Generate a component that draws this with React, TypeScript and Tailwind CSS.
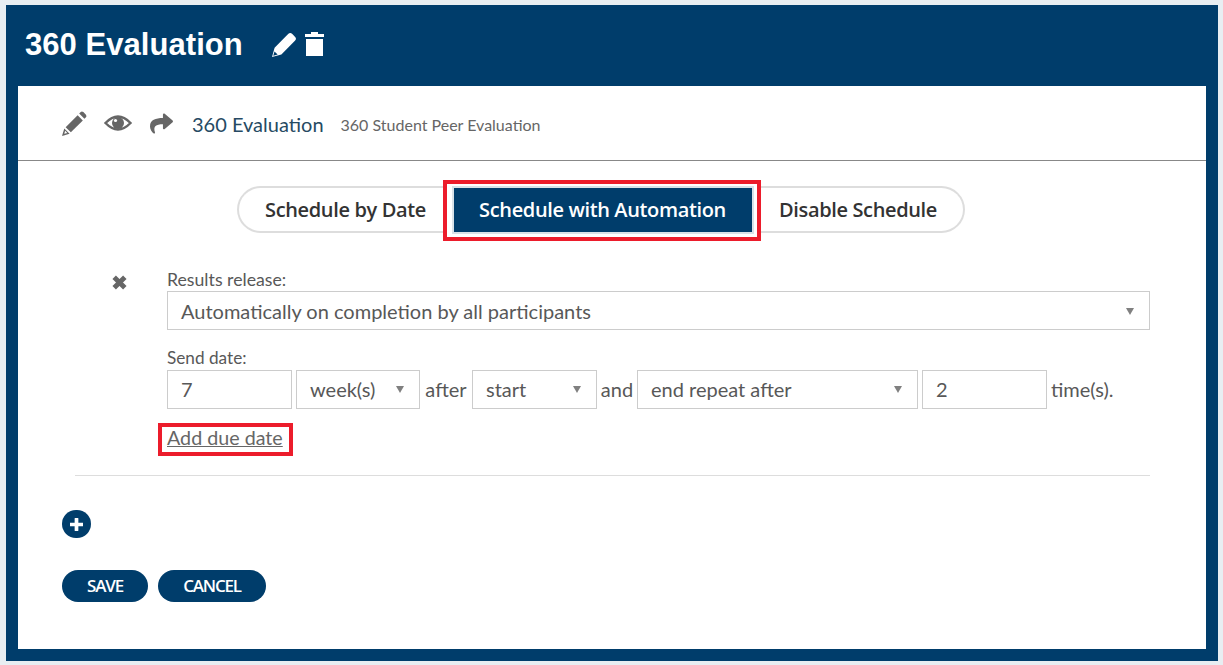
import React from 'react';
import { FaShare } from 'react-icons/fa';

const Caret = () => (
    <svg width="8" height="8" viewBox="0 0 8 8" className="shrink-0">
        <path d="M0 1h8L4 8z" fill="#808080" />
    </svg>
);

const SolidPencil = () => (
    <svg width="25" height="25" viewBox="0 0 24 24" className="ml-[29px]">
        <path d="M0 24 2.5 15 15.5 2Q17.5 0 19.5 2L22 4.5Q24 6.5 22 8.5L9 21.5Z" fill="#ffffff" />
        <path d="M1.2 22.8 2.4 18.6 5.4 21.6Z" fill="#003d6b" />
    </svg>
);

const Trash = () => (
    <svg width="21" height="24" viewBox="0 0 21 24" className="ml-[7px]">
        <path d="M7 0h7v2h6v3H1V2h6z" fill="#ffffff" />
        <path d="M2 7h17v17H2z" fill="#ffffff" />
    </svg>
);

const EditPencil = () => (
    <svg width="25" height="25" viewBox="0 0 24 24" fill="#666666">
        <path d="M3.5 15.5 15 4 20 9 8.5 20.5Z" />
        <path d="M16.5 2.5 18 1Q19 0 20.5 1L23 3.5Q24 5 23 6L21.5 7.5Z" />
        <path fillRule="evenodd" d="M0 24 2.2 16.7 7.3 21.8ZM2.2 21.8 5 21 3 19Z" />
    </svg>
);

const Eye = () => (
    <svg width="28" height="20" viewBox="0 0 28 20" className="ml-[17px]">
        <path d="M1.5 10Q14-3 26.5 10 14 23 1.5 10Z" fill="none" stroke="#666666" strokeWidth="2.4" />
        <circle cx="14" cy="10" r="6" fill="#666666" />
        <circle cx="11.5" cy="7.5" r="1.6" fill="#ffffff" />
    </svg>
);

const Cross = () => (
    <svg width="17" height="17" viewBox="0 0 16 16" className="mt-[6px] ml-[36px] shrink-0">
        <path d="M3 3 13 13M13 3 3 13" stroke="#666666" strokeWidth="4.6" />
    </svg>
);

const Plus = () => (
    <svg width="13" height="13" viewBox="0 0 14 14">
        <path d="M7 1V13M1 7H13" stroke="#ffffff" strokeWidth="4" strokeLinecap="round" />
    </svg>
);

function Select({ label, className }: { label: string; className: string }) {
    return (
        <div className={`h-[39px] flex items-center justify-between border border-[#cccccc] bg-white pl-[13px] pr-[15px] text-[20px] text-[#585858] ${className}`}>
            <span>{label}</span>
            <Caret />
        </div>
    );
}

function NumberBox({ value }: { value: string }) {
    return (
        <div className="h-[39px] w-[125px] flex items-center border border-[#cccccc] bg-white pl-[13px] pb-[2px] text-[20px] text-[#585858]">
            {value}
        </div>
    );
}

export default function App() {
    return (
        <main className="h-[665px] bg-[#e8eef2] pt-[5px] pl-[6px] pr-[5px] pb-[4px] font-['Lato',sans-serif]">
            <div className="h-full bg-[#003d6b] px-[12px] pb-[12px] flex flex-col">
                <header className="h-[81px] flex items-center text-white pb-[3px] pl-[7px]">
                    <h1 className="mt-[2px] text-[31px] font-bold tracking-[0.05px] font-['Liberation_Sans',sans-serif]">360 Evaluation</h1>
                    <SolidPencil />
                    <Trash />
                </header>

                <div className="flex-1 bg-white flex flex-col">
                    <div className="h-[75px] border-b border-[#888888] flex items-center pl-[44px] text-[#666666]">
                        <EditPencil />
                        <Eye />
                        <FaShare className="ml-[17px] w-[25px] h-[23px]" />
                        <span className="ml-[18px] mt-[2px] text-[20px] text-[#264a63]">360 Evaluation</span>
                        <span className="ml-[17px] mt-[3px] text-[16px] text-[#666666]">360 Student Peer Evaluation</span>
                    </div>

                    {/* --- tabs --- */}
                    <div className="mt-[19px] flex justify-center pr-[23px]">
                        <div className="h-[61px] flex items-center pl-[1px] font-['Open_Sans',sans-serif] text-[20px] font-semibold text-[#333333] tracking-[-0.36px]">
                            <div className="h-[47px] w-[206px] mb-[2px] flex items-center justify-center border-2 border-r-0 border-[#dddddd] rounded-l-[24px] pl-[9px]">
                                Schedule by Date
                            </div>
                            <div className="h-[61px] w-[318px] border-[4px] border-[#ec1c2b] bg-white flex items-center justify-center">
                                <div className="h-[44px] w-[298px] mb-[1px] ml-[1px] pb-[1px] bg-[#003d6b] text-white flex items-center justify-center outline outline-2 outline-[#d9e2e8]">
                                    Schedule with Automation
                                </div>
                            </div>
                            <div className="h-[47px] w-[204px] mb-[2px] flex items-center justify-center border-2 border-l-0 border-[#dddddd] rounded-r-[24px] pr-[8px]">
                                Disable Schedule
                            </div>
                        </div>
                    </div>

                    {/* --- rule --- */}
                    <div className="mt-[27px] ml-[57px] mr-[56px] border-b border-[#dddddd] h-[208px] flex">
                        <Cross />
                        <div className="ml-[39px] flex-1 text-[#585858]">
                            <div className="text-[17.7px] leading-[23px]">Results release:</div>
                            <Select label="Automatically on completion by all participants" className="w-full" />
                            <div className="text-[17.2px] leading-[21px] mt-[17px] mb-[2px]">Send date:</div>
                            <div className="flex items-center text-[20px]">
                                <NumberBox value="7" />
                                <Select label="week(s)" className="ml-[4px] w-[124px] pb-[2px]" />
                                <span className="w-[52px] pb-[2px] text-center">after</span>
                                <Select label="start" className="w-[125px] pb-[2px]" />
                                <span className="w-[40px] pb-[2px] text-center">and</span>
                                <Select label="end repeat after" className="w-[281px] pb-[2px]" />
                                <div className="ml-[4px]"><NumberBox value="2" /></div>
                                <span className="ml-[4px] pb-[2px]">time(s).</span>
                            </div>
                            <div className="mt-[14px] -ml-[9px] h-[33px] w-[135px] border-[4px] border-[#ec1c2b] flex items-center pl-[5px] pb-[4px] text-[19.7px] text-[#666666] underline">
                                Add due date
                            </div>
                        </div>
                    </div>

                    <div className="mt-[34px] ml-[44px] w-[29px] h-[28px] rounded-full bg-[#003d6b] flex items-center justify-center">
                        <Plus />
                    </div>

                    <div className="mt-[32px] ml-[44px] flex gap-[10px] font-['Open_Sans',sans-serif] text-[17px] font-semibold text-white tracking-[-1.2px]">
                        <button className="h-[32px] w-[86px] rounded-full bg-[#003d6b]">SAVE</button>
                        <button className="h-[32px] w-[108px] rounded-full bg-[#003d6b]">CANCEL</button>
                    </div>
                </div>
            </div>
        </main>
    );
}
